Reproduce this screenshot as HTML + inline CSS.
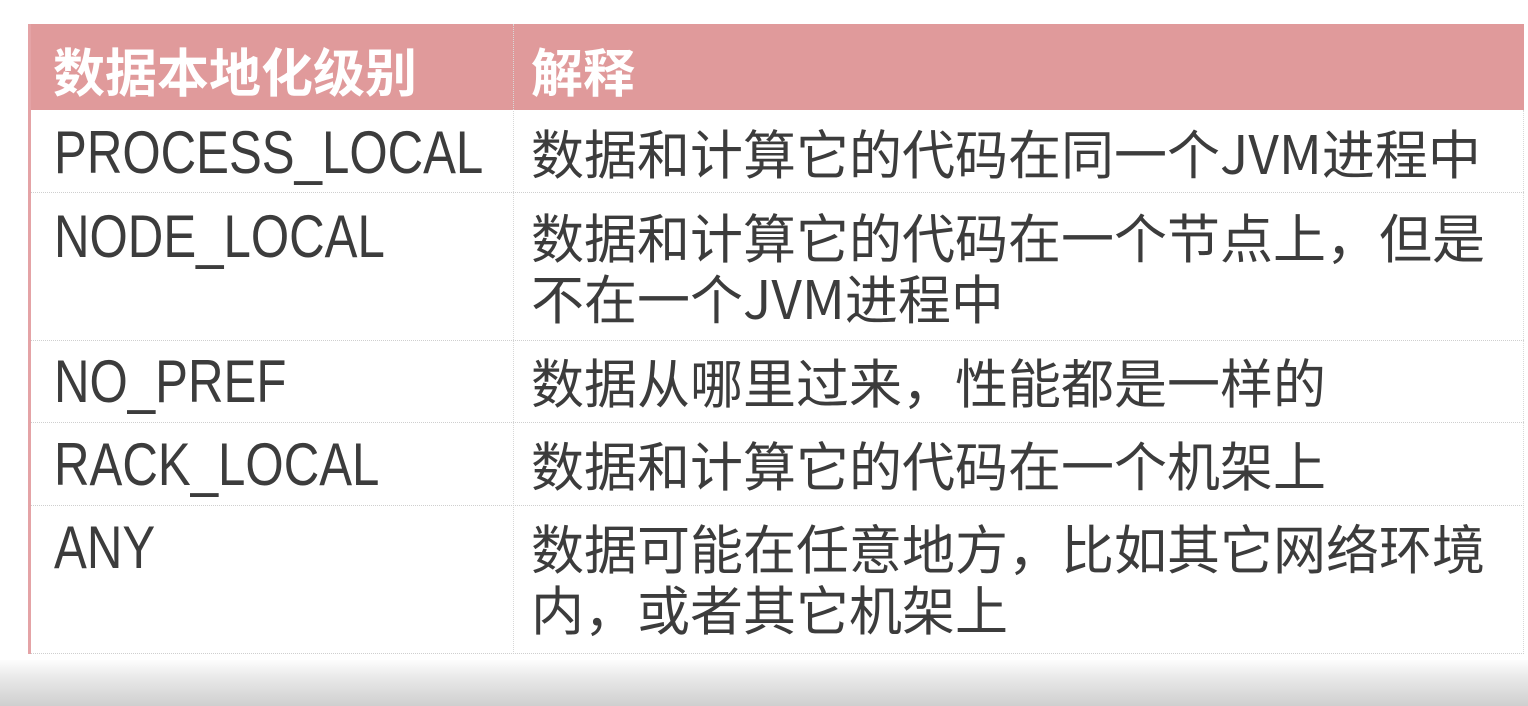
<!DOCTYPE html>
<html><head><meta charset="utf-8"><style>
html,body{margin:0;padding:0;width:1528px;height:706px;overflow:hidden;background:#fff;}
body{position:relative;font-family:"Liberation Sans","Noto Sans CJK SC",sans-serif;color:#3c3c3c;}
.hdr{position:absolute;left:28px;top:24px;width:1496px;height:86px;background:#e09a9b;}
.lb{position:absolute;left:28px;top:24px;width:3px;height:630px;background:#e4a3a6;}
.h{position:absolute;top:40px;color:#fff;font-weight:bold;font-size:52px;line-height:60px;font-family:"Noto Sans CJK SC",sans-serif;}
.hl{position:absolute;left:31px;right:4px;border-top:1px dotted #cfcfcf;height:0;}
.vl{position:absolute;left:513px;top:24px;height:630px;border-left:1px dotted #d8d8d8;width:0}
.rl{position:absolute;left:1523px;top:110px;height:544px;border-left:1px dotted #d8d8d8;width:0}
.k{position:absolute;left:54px;font-size:60px;line-height:60px;transform:scaleX(0.82);transform-origin:left;white-space:nowrap;}
.v{position:absolute;left:531px;font-size:53px;line-height:61px;font-family:"Noto Sans CJK SC",sans-serif;white-space:nowrap;}
.bot{position:absolute;left:0;top:660px;width:1528px;height:46px;background:linear-gradient(#fdfdfd,#e8e8e8 40%,#cfcfcf);}
</style></head><body>
<div class="hdr"></div>
<div class="lb"></div>
<div class="h" style="left:53px">数据本地化级别</div>
<div class="h" style="left:531px">解释</div>
<div class="vl"></div><div class="rl"></div>
<div class="hl" style="top:192px"></div>
<div class="hl" style="top:340px"></div>
<div class="hl" style="top:422px"></div>
<div class="hl" style="top:505px"></div>
<div class="hl" style="top:653px"></div>

<div class="k" style="top:123px">PROCESS_LOCAL</div>
<div class="v" style="top:122px">数据和计算它的代码在同一个JVM进程中</div>

<div class="k" style="top:207px">NODE_LOCAL</div>
<div class="v" style="top:206px">数据和计算它的代码在一个节点上，但是<br>不在一个JVM进程中</div>

<div class="k" style="top:352px">NO_PREF</div>
<div class="v" style="top:351px">数据从哪里过来，性能都是一样的</div>

<div class="k" style="top:435px">RACK_LOCAL</div>
<div class="v" style="top:434px">数据和计算它的代码在一个机架上</div>

<div class="k" style="top:518px">ANY</div>
<div class="v" style="top:517px">数据可能在任意地方，比如其它网络环境<br>内，或者其它机架上</div>

<div class="bot"></div>
</body></html>
